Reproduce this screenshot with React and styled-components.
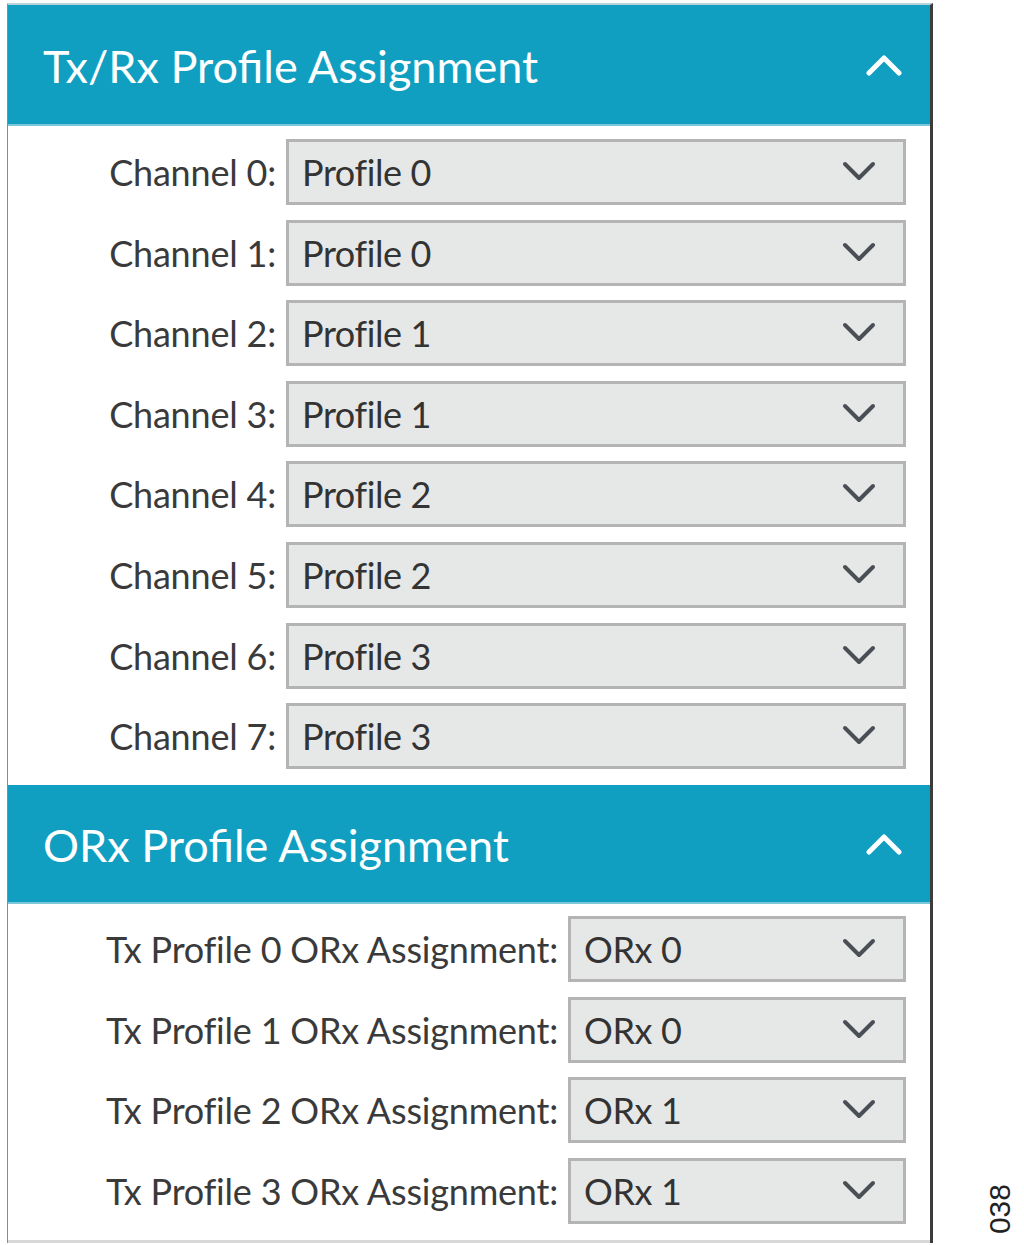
import React from 'react';
import styled, { createGlobalStyle } from 'styled-components';

const GlobalStyle = createGlobalStyle`
  body {
    margin: 0;
    background: #ffffff;
    font-family: Lato, "Open Sans", sans-serif;
  }
`;

const Page = styled.div`
  display: flex;
  align-items: flex-start;
  width: 1024px;
  height: 1245px;
`;

const Panel = styled.div`
  width: 922px;
  margin: 3px 0 0 7px;
  border-left: 1px solid #8a8a8a;
  border-right: 3px solid #3c3c3c;
  border-top: 2px solid #b9d3dc;
  display: flex;
  flex-direction: column;
`;

const Header = styled.div`
  height: ${p => p.height}px;
  background: #109fc1;
  display: flex;
  align-items: center;
  justify-content: space-between;
  padding: 0 28px 0 35px;
  border-bottom: 2px solid #7cc6da;
  box-sizing: border-box;
`;

const Title = styled.div`
  color: #ffffff;
  font-size: 45px;
  letter-spacing: 0px;
  padding-top: 2px;
`;

const Body = styled.div`
  display: flex;
  flex-direction: column;
  gap: 14.6px;
  padding: ${p => p.pad};
`;

const Row = styled.div`
  display: grid;
  grid-template-columns: ${p => p.labelWidth}px 1fr;
  column-gap: 10px;
  align-items: center;
  padding-right: 24px;
`;

const Label = styled.div`
  text-align: right;
  color: #3a3a3a;
  font-size: 36px;
  letter-spacing: -0.2px;
`;

const Select = styled.div`
  height: 66px;
  box-sizing: border-box;
  background: #e6e7e7;
  border: 3px solid #b4b4b4;
  display: flex;
  align-items: center;
  justify-content: space-between;
  padding: 0 26px 0 13px;
  color: #333333;
  font-size: 36px;
  letter-spacing: -0.4px;
`;

const Footer = styled.div`
  height: 4px;
  border-bottom: 3px solid #d8d8d8;
`;

const Note = styled.div`
  margin: 1184px 0 0 50px;
  writing-mode: vertical-rl;
  transform: rotate(180deg);
  font-family: "Liberation Sans", Arial, sans-serif;
  font-size: 30px;
  color: #222222;
`;

const Chevron = ({ up, color }) => (
  <svg width="36" height="22" viewBox="0 0 36 22">
    <path
      d={up ? 'M3 19 L18 4 L33 19' : 'M4 3 L18 17 L32 3'}
      fill="none"
      stroke={color}
      strokeWidth={up ? 5 : 4}
      strokeLinecap="round"
      strokeLinejoin="round"
    />
  </svg>
);

const channels = ['Profile 0', 'Profile 0', 'Profile 1', 'Profile 1', 'Profile 2', 'Profile 2', 'Profile 3', 'Profile 3'];
const orx = ['ORx 0', 'ORx 0', 'ORx 1', 'ORx 1'];

const App = () => (
  <Page>
    <GlobalStyle />
    <Panel>
      <Header height={121}>
        <Title>Tx/Rx Profile Assignment</Title>
        <Chevron up color="#ffffff" />
      </Header>
      <Body pad="13px 0 16px">
        {channels.map((value, i) => (
          <Row key={i} labelWidth={268}>
            <Label>Channel {i}:</Label>
            <Select>
              {value}
              <Chevron color="#4a4f55" />
            </Select>
          </Row>
        ))}
      </Body>
      <Header height={119}>
        <Title>ORx Profile Assignment</Title>
        <Chevron up color="#ffffff" />
      </Header>
      <Body pad="12px 0 12px">
        {orx.map((value, i) => (
          <Row key={i} labelWidth={550}>
            <Label>Tx Profile {i} ORx Assignment:</Label>
            <Select>
              {value}
              <Chevron color="#4a4f55" />
            </Select>
          </Row>
        ))}
      </Body>
      <Footer />
    </Panel>
    <Note>038</Note>
  </Page>
);

export default App;
